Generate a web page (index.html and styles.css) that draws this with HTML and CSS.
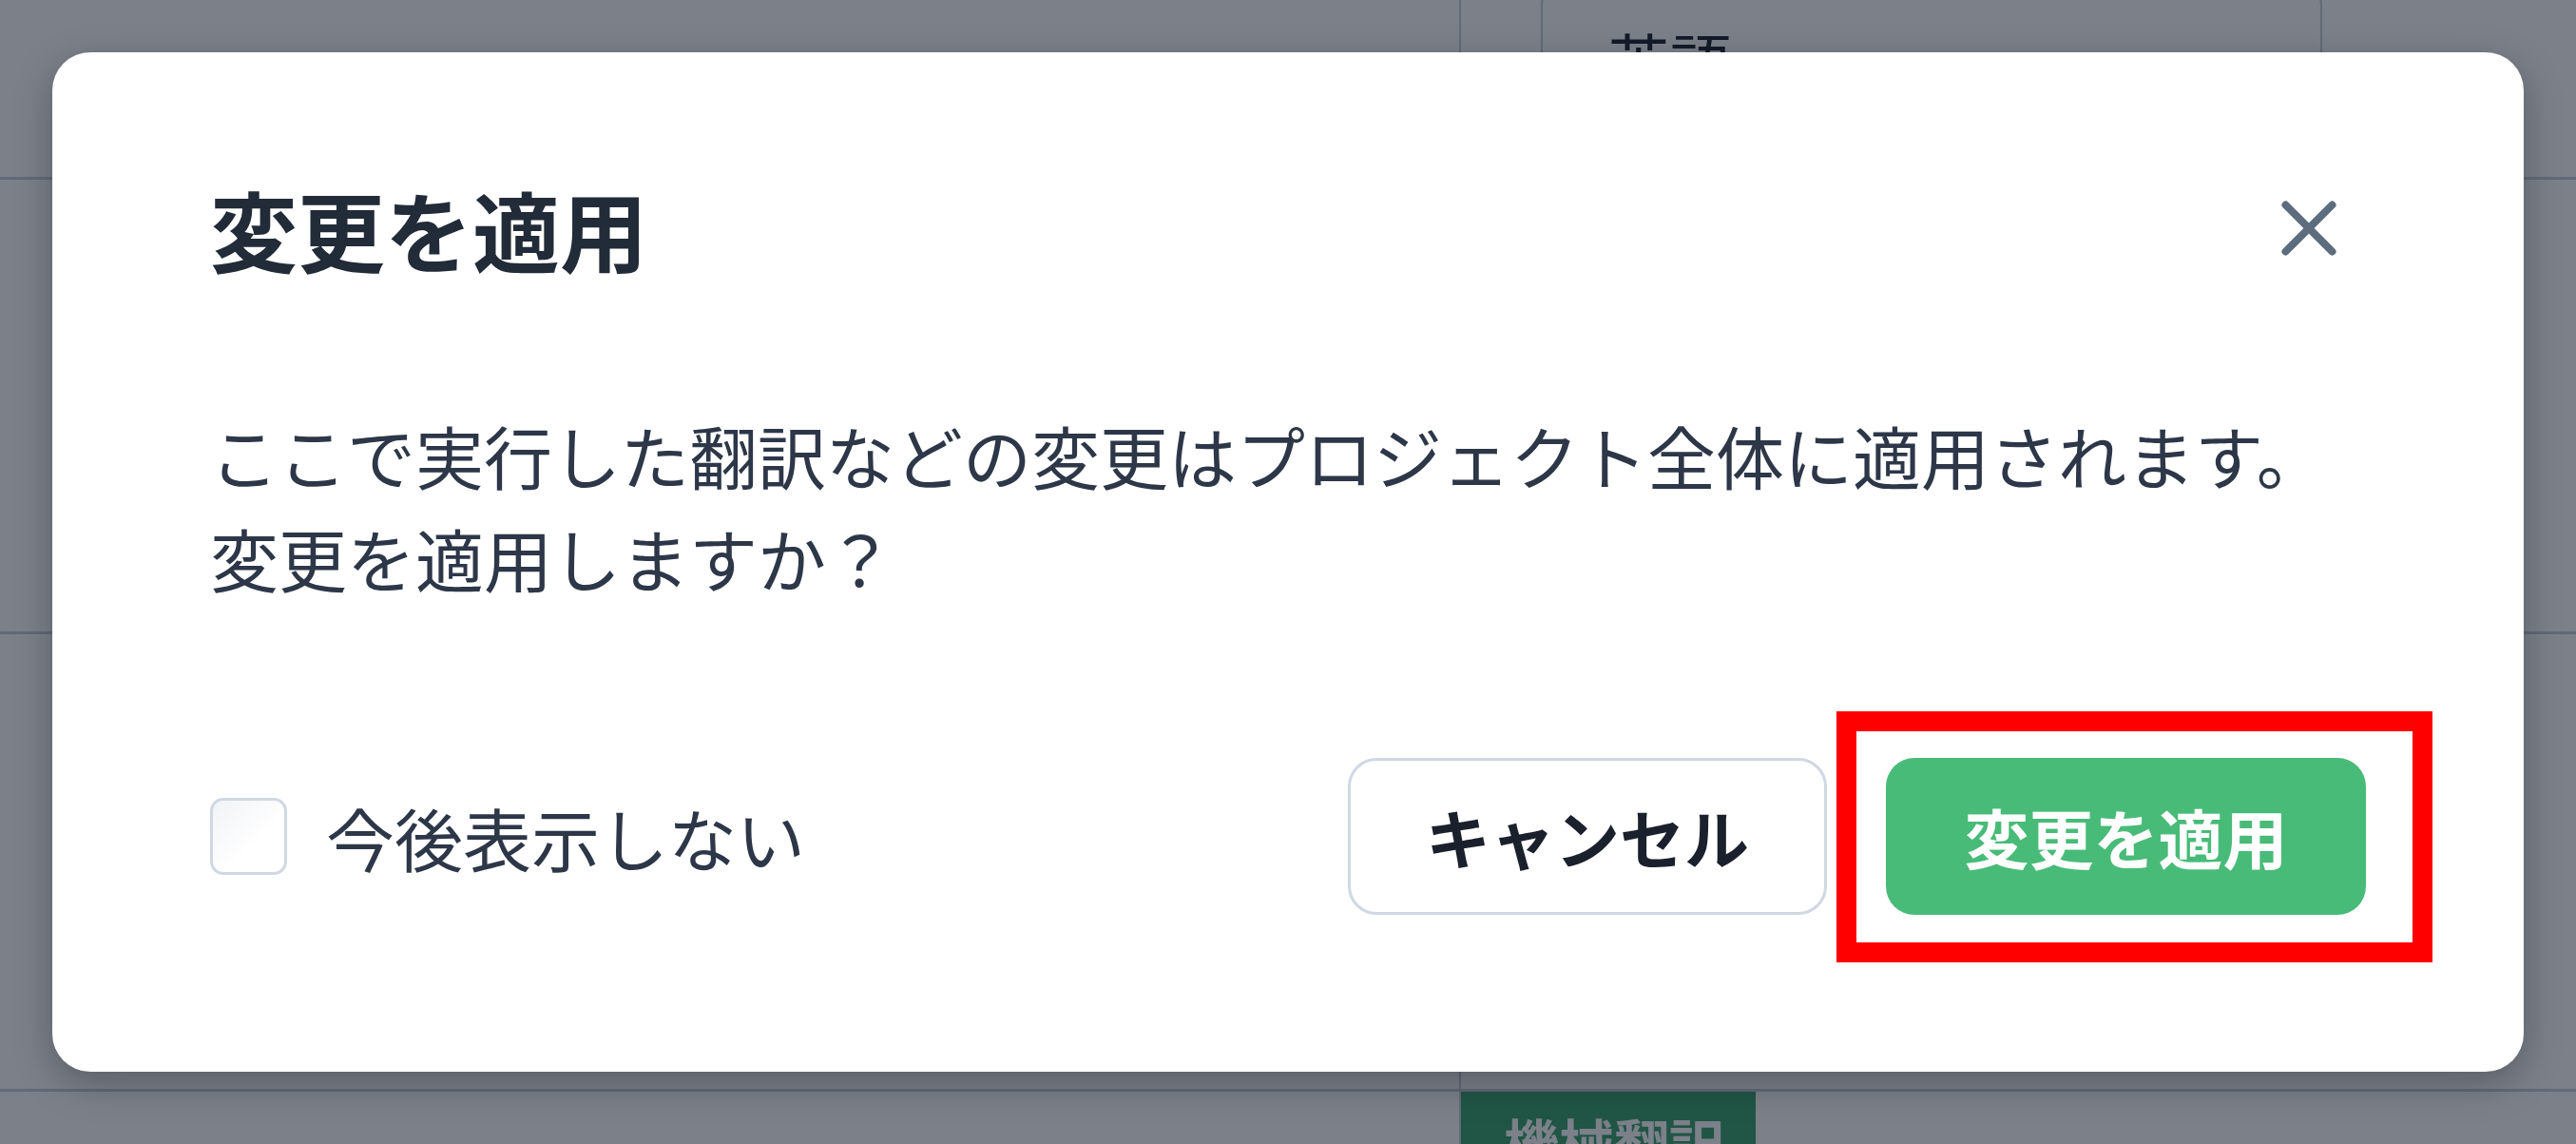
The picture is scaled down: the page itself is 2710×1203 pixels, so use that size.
FILE: index.html
```html
<!DOCTYPE html>
<html lang="ja">
<head>
<meta charset="utf-8">
<title>変更を適用</title>
<link rel="stylesheet" href="styles.css">
</head>
<body>
<div class="page">
  <div class="row row-1">
    <div class="cell cell-left"></div>
    <div class="cell cell-right">
      <div class="select-box">英語</div>
    </div>
  </div>
  <div class="row row-2">
    <div class="cell cell-left"></div>
    <div class="cell cell-right"></div>
  </div>
  <div class="row row-3">
    <div class="cell cell-left"></div>
    <div class="cell cell-right"></div>
  </div>
  <div class="row row-4">
    <div class="cell cell-left"></div>
    <div class="cell cell-right">
      <span class="badge">機械翻訳</span>
    </div>
  </div>
</div>

<div class="overlay">
  <div class="modal" role="dialog" aria-labelledby="modal-title">
    <header class="modal-header">
      <h2 class="modal-title" id="modal-title">変更を適用</h2>
      <button class="close-btn" aria-label="閉じる">
        <svg width="58" height="58" viewBox="0 0 58 58" aria-hidden="true">
          <path d="M4.5 4.5 L53.5 53.5 M53.5 4.5 L4.5 53.5" stroke="#5d6d7e" stroke-width="8" stroke-linecap="round" fill="none"/>
        </svg>
      </button>
    </header>
    <p class="modal-body">ここで実行した翻訳などの変更はプロジェクト全体に適用されます。<br>変更を適用しますか？</p>
    <footer class="modal-footer">
      <label class="check">
        <span class="check-box"></span>
        <span class="check-label">今後表示しない</span>
      </label>
      <div class="actions">
        <button class="btn btn-cancel">キャンセル</button>
        <button class="btn btn-apply">変更を適用</button>
      </div>
    </footer>
  </div>
</div>

<div class="highlight"></div>
</body>
</html>
```

FILE: styles.css
```css
* {
  box-sizing: border-box;
}

html, body {
  margin: 0;
  padding: 0;
  width: 2710px;
  height: 1203px;
  overflow: hidden;
  background: #ffffff;
  font-family: "Noto Sans CJK JP", "Noto Sans", sans-serif;
  color: #2d3748;
}

/* ---------- background page ---------- */
.page {
  width: 2710px;
  height: 1203px;
  overflow: hidden;
}

.row {
  display: grid;
  grid-template-columns: 1537px 1fr;
  border-bottom: 3px solid #c6ced9;
}

.row-1 { height: 189px; }
.row-2 { height: 478px; }
.row-3 { height: 481px; }
.row-4 { height: 55px; border-bottom: none; overflow: hidden; }

.cell-left {
  border-right: 2px solid #c6ced9;
}

.cell-right {
  display: flex;
  align-items: flex-start;
}

.row-1 .cell-right {
  padding-left: 84px;
}

.select-box {
  width: 822px;
  height: 150px;
  margin-top: -24px;
  border: 2px solid #c6ced9;
  border-radius: 30px;
  padding: 38px 0 0 68px;
  font-size: 66px;
  line-height: 1.4;
  color: #1a202c;
}

.badge {
  display: block;
  width: 310px;
  height: 55px;
  overflow: hidden;
  background: #38a169;
  color: #ffffff;
  font-weight: 700;
  font-size: 58px;
  line-height: 1;
  padding: 24px 0 0 45px;
}

/* ---------- overlay & modal ---------- */
.overlay {
  position: fixed;
  inset: 0;
  background: rgba(15, 24, 40, 0.55);
  display: flex;
  justify-content: center;
  align-items: flex-start;
  padding-top: 55px;
}

.modal {
  width: 2600px;
  background: #ffffff;
  border-radius: 40px;
  padding: 126px 166px 165px 166px;
  box-shadow: 0 12px 40px rgba(0, 0, 0, 0.28);
}

.modal-header {
  display: flex;
  align-items: center;
  justify-content: space-between;
  height: 117px;
}

.modal-title {
  margin: 0;
  font-size: 92px;
  line-height: 117px;
  font-weight: 700;
  color: #222b38;
}

.close-btn {
  width: 121px;
  height: 121px;
  border: none;
  background: transparent;
  padding: 0;
  display: flex;
  align-items: center;
  justify-content: center;
}

.modal-body {
  margin: 126px 0 0 0;
  font-size: 72px;
  line-height: 108px;
  color: #2d3748;
}

.modal-footer {
  margin-top: 157px;
  display: flex;
  align-items: center;
  justify-content: space-between;
  height: 165px;
}

.check {
  display: flex;
  align-items: center;
  gap: 41px;
}

.check-box {
  width: 81px;
  height: 81px;
  border: 3px solid #cfd8e3;
  border-radius: 14px;
  background: linear-gradient(135deg, #f1f3f6 0%, #ffffff 60%);
}

.check-label {
  font-size: 72px;
  line-height: 108px;
  color: #2d3748;
}

.actions {
  display: flex;
  gap: 62px;
}

.btn {
  height: 165px;
  border-radius: 30px;
  font-family: "Noto Sans CJK JP", "Noto Sans", sans-serif;
  font-weight: 700;
  font-size: 68px;
  line-height: 1;
  padding: 0;
}

.btn-cancel {
  width: 504px;
  background: #ffffff;
  border: 3px solid #cfd8e3;
  color: #1a202c;
}

.btn-apply {
  width: 505px;
  background: #48bb78;
  border: none;
  color: #ffffff;
}

/* annotation frame drawn over the screenshot */
.highlight {
  position: absolute;
  left: 1932px;
  top: 748px;
  width: 627px;
  height: 264px;
  border: 21px solid #ff0000;
}
```
